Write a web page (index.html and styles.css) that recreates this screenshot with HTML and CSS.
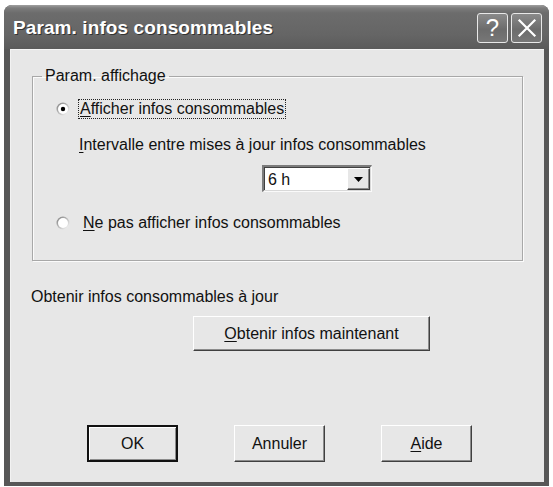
FILE: index.html
```html
<!DOCTYPE html>
<html lang="fr">
<head>
<meta charset="utf-8">
<title>Param. infos consommables</title>
<link rel="stylesheet" href="styles.css">
</head>
<body>
<div class="window">
  <div class="titlebar">
    <span class="title">Param. infos consommables</span>
    <div class="caption-buttons">
      <span class="cap-btn">?</span>
      <span class="cap-btn">
        <svg width="20" height="20" viewBox="0 0 20 20"><path d="M2.5 2.5 L17.5 17.5 M17.5 2.5 L2.5 17.5" stroke="#fff" stroke-width="2.2" stroke-linecap="square"/></svg>
      </span>
    </div>
  </div>
  <div class="client">
    <fieldset class="group">
      <legend>Param. affichage</legend>
      <div class="radio-row first">
        <span class="radio"><svg width="14" height="14" viewBox="0 0 14 14"><defs><linearGradient id="rg1" x1="0" y1="0" x2="1" y2="1"><stop offset="0" stop-color="#7a7a7a"/><stop offset="1" stop-color="#ffffff"/></linearGradient></defs><circle cx="7" cy="7" r="6.5" fill="url(#rg1)"/><circle cx="7" cy="7" r="5" fill="#fff"/><circle cx="7" cy="7" r="2.2" fill="#000"/></svg></span>
        <span class="label focus"><u>A</u>fficher infos consommables</span>
      </div>
      <div class="sublabel"><u>I</u>ntervalle entre mises à jour infos consommables</div>
      <div class="select">
        <span class="select-value">6 h</span>
        <span class="select-arrow"><svg width="9" height="5" viewBox="0 0 9 5"><path d="M0 0 H9 L4.5 5 Z" fill="#000"/></svg></span>
      </div>
      <div class="radio-row second">
        <span class="radio"><svg width="14" height="14" viewBox="0 0 14 14"><defs><linearGradient id="rg2" x1="0" y1="0" x2="1" y2="1"><stop offset="0" stop-color="#7a7a7a"/><stop offset="1" stop-color="#ffffff"/></linearGradient></defs><circle cx="7" cy="7" r="6.5" fill="url(#rg2)"/><circle cx="7" cy="7" r="5" fill="#fff"/></svg></span>
        <span class="label"><u>N</u>e pas afficher infos consommables</span>
      </div>
    </fieldset>
    <div class="update-text">Obtenir infos consommables à jour</div>
    <div class="update-row">
      <button class="btn wide"><u>O</u>btenir infos maintenant</button>
    </div>
    <div class="bottom-row">
      <button class="btn default">OK</button>
      <button class="btn">Annuler</button>
      <button class="btn"><u>A</u>ide</button>
    </div>
  </div>
</div>
</body>
</html>
```
FILE: styles.css
```css
html, body {
  margin: 0;
  padding: 0;
  background: #ffffff;
}
body {
  font-family: "Liberation Sans", Arial, sans-serif;
  font-size: 16px;
  color: #111;
}
.window {
  margin: 5px 0 0 4px;
  width: 545px;
  height: 481px;
  background: #575757;
  border-radius: 8px 8px 0 0;
  display: flex;
  flex-direction: column;
  box-sizing: border-box;
  padding: 0 5px 4px 6px;
}
.titlebar {
  height: 44px;
  flex: none;
  margin: 0 -5px 0 -6px;
  padding: 0 7px 0 7px;
  border-radius: 8px 8px 0 0;
  background: linear-gradient(to bottom, #a0a0a0 0px, #7c7c7c 3px, #6c6c6c 8px, #656565 30px, #5a5a5a 44px);
  display: flex;
  align-items: center;
  justify-content: space-between;
}
.title {
  font-family: "Liberation Sans", Arial, sans-serif;
  font-weight: bold;
  font-size: 19px;
  color: #fff;
  text-shadow: 1px 1px 0 #333;
  letter-spacing: 0.1px;
  padding-left: 2px;
  padding-top: 2px;
}
.caption-buttons {
  display: flex;
  gap: 3px;
  padding-top: 1px;
}
.cap-btn {
  width: 31px;
  height: 30px;
  box-sizing: border-box;
  border: 1px solid #e8e8e8;
  border-radius: 3px;
  background: linear-gradient(to bottom, #8a8a8a, #6c6c6c 55%, #777777);
  color: #fff;
  display: flex;
  align-items: center;
  justify-content: center;
  font-family: "Liberation Sans", Arial, sans-serif;
  font-size: 24px;
  line-height: 1;
}
.client {
  flex: 1;
  background: #e7e7e7;
  border-top: 1px solid #f4f4f4;
  border-left: 1px solid #f2f2f2;
  padding: 0 21px 0 21px;
  display: flex;
  flex-direction: column;
}
.group {
  margin: 17px 0 0 0;
  padding: 0 0 27px 0;
  border: 1px solid #a8a8a8;
  box-shadow: inset 1px 1px 0 #fbfbfb, 1px 1px 0 #fbfbfb;
  min-width: 0;
}
.group legend {
  margin-left: 9px;
  padding: 0 3px;
  line-height: 18px;
}
.radio-row {
  display: flex;
  align-items: center;
  height: 20px;
  padding-left: 23px;
}
.radio-row.first { margin-top: 14px; }
.radio-row.second { margin-top: 21px; }
.radio {
  width: 14px;
  height: 14px;
  display: block;
  flex: none;
}
.radio svg { display: block; }
.label {
  margin-left: 12px;
  padding: 0 1px;
  line-height: 18px;
}
.label.focus {
  outline: 1px dotted #222;
  outline-offset: 0;
  margin-left: 9px;
}
.sublabel {
  margin: 16px 0 0 46px;
  line-height: 20px;
  height: 20px;
}
.select {
  margin: 10px 0 0 229px;
  width: 110px;
  height: 27px;
  box-sizing: border-box;
  background: #fff;
  border-top: 2px solid #7c7c7c;
  border-left: 2px solid #7c7c7c;
  border-right: 1px solid #fafafa;
  border-bottom: 1px solid #fafafa;
  box-shadow: inset -1px -1px 0 #d8d8d8, inset 1px 1px 0 #404040;
  display: flex;
  align-items: stretch;
  justify-content: space-between;
  padding: 1px 1px 1px 4px;
}
.select-value {
  align-self: center;
  line-height: 18px;
  padding-top: 1px;
}
.select-arrow {
  width: 23px;
  box-sizing: border-box;
  background: #e7e7e7;
  border-top: 1px solid #fff;
  border-left: 1px solid #fff;
  border-right: 1px solid #404040;
  border-bottom: 1px solid #404040;
  box-shadow: inset -1px -1px 0 #8a8a8a;
  display: flex;
  align-items: center;
  justify-content: center;
}
.select-arrow svg { display: block; }
.update-text {
  margin: 27px 0 0 -1px;
  line-height: 18px;
  height: 18px;
}
.update-row {
  margin: 10px 0 0 161px;
}
.btn {
  font-family: "Liberation Sans", Arial, sans-serif;
  font-size: 16px;
  color: #111;
  background: #e7e7e7;
  box-sizing: border-box;
  border-top: 1px solid #ffffff;
  border-left: 1px solid #ffffff;
  border-right: 1px solid #404040;
  border-bottom: 1px solid #404040;
  box-shadow: inset -1px -1px 0 #8c8c8c;
  border-radius: 0;
  padding: 0;
  margin: 0;
  height: 37px;
  width: 91px;
}
.btn.wide {
  width: 237px;
  height: 35px;
}
.btn.default {
  border: 2px solid #111;
  box-shadow: inset 1px 1px 0 #fff, inset -1px -1px 0 #8c8c8c;
}
.bottom-row {
  display: flex;
  margin: 74px 0 0 55px;
  gap: 56px;
}
u {
  text-decoration: underline;
  text-underline-offset: 2px;
}
```
